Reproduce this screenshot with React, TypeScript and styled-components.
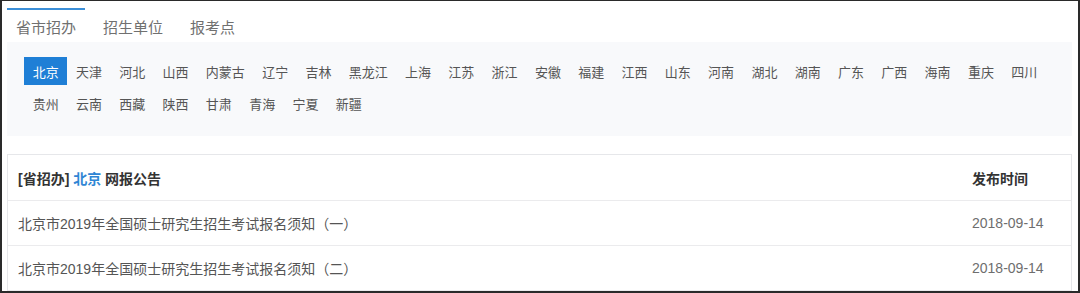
import React, { useState } from "react";
import styled, { createGlobalStyle } from "styled-components";

const GlobalStyle = createGlobalStyle`
  html, body {
    margin: 0;
    padding: 0;
    background: #ffffff;
  }
  body {
    font-family: "Liberation Sans", "Noto Sans CJK SC", sans-serif;
  }
`;

const tabs = ["省市招办", "招生单位", "报考点"];

const provinces = [
  "北京", "天津", "河北", "山西", "内蒙古", "辽宁", "吉林", "黑龙江", "上海", "江苏",
  "浙江", "安徽", "福建", "江西", "山东", "河南", "湖北", "湖南", "广东", "广西",
  "海南", "重庆", "四川", "贵州", "云南", "西藏", "陕西", "甘肃", "青海", "宁夏", "新疆",
];

const notices = [
  { title: "北京市2019年全国硕士研究生招生考试报名须知（一）", date: "2018-09-14" },
  { title: "北京市2019年全国硕士研究生招生考试报名须知（二）", date: "2018-09-14" },
];

export default function App() {
  const [activeTab, setActiveTab] = useState(0);
  const [province, setProvince] = useState("北京");

  return (
    <>
      <GlobalStyle />
      <Frame>
        <TabBar>
          {tabs.map((t, i) => (
            <Tab key={t} $active={i === activeTab} onClick={() => setActiveTab(i)}>
              {t}
            </Tab>
          ))}
        </TabBar>
        <ProvincePanel>
          {provinces.map((p) => (
            <ProvinceItem key={p} $active={p === province} onClick={() => setProvince(p)}>
              {p}
            </ProvinceItem>
          ))}
        </ProvincePanel>
        <NoticeCard>
          <HeaderRow>
            <HeaderTitle>
              [省招办] <Highlight>{province}</Highlight> 网报公告
            </HeaderTitle>
            <HeaderTitle>发布时间</HeaderTitle>
          </HeaderRow>
          {notices.map((n) => (
            <NoticeRow key={n.title}>
              <NoticeTitle>{n.title}</NoticeTitle>
              <NoticeDate>{n.date}</NoticeDate>
            </NoticeRow>
          ))}
        </NoticeCard>
      </Frame>
    </>
  );
}

const Frame = styled.div`
  box-sizing: border-box;
  width: 1080px;
  height: 293px;
  overflow: hidden;
  border: 2px solid #2a2a2a;
  border-top-width: 1px;
  padding: 7px 6px 0 5px;
  background: #ffffff;
`;

const TabBar = styled.div`
  display: flex;
  gap: 9px;
  height: 34px;
`;

const Tab = styled.div<{ $active: boolean }>`
  box-sizing: border-box;
  display: flex;
  align-items: center;
  padding: 0 9px;
  height: 34px;
  border-top: 2px solid ${(p) => (p.$active ? "#3b8fd8" : "transparent")};
  font-size: 15px;
  color: #707070;
  cursor: pointer;
`;

const ProvincePanel = styled.div`
  display: flex;
  flex-wrap: wrap;
  row-gap: 4px;
  padding: 15px 17px 19px 17px;
  background: #f8f9fb;
`;

const ProvinceItem = styled.div<{ $active: boolean }>`
  display: flex;
  align-items: center;
  height: 28px;
  padding: 0 8.65px;
  font-size: 13px;
  color: ${(p) => (p.$active ? "#ffffff" : "#555555")};
  background: ${(p) => (p.$active ? "#1f7fd6" : "transparent")};
  cursor: pointer;
`;

const NoticeCard = styled.div`
  margin-top: 18px;
  border: 1px solid #e6e7ea;
  border-bottom: none;
`;

const HeaderRow = styled.div`
  display: grid;
  grid-template-columns: 1fr 89px;
  align-items: center;
  height: 45px;
  padding: 0 10px;
  border-bottom: 1px solid #ebebed;
`;

const HeaderTitle = styled.div`
  font-size: 14px;
  font-weight: bold;
  color: #333333;
`;

const Highlight = styled.span`
  color: #2f86d4;
`;

const NoticeRow = styled.div`
  display: grid;
  grid-template-columns: 1fr 89px;
  align-items: center;
  height: 44px;
  padding: 0 10px;
  border-bottom: 1px solid #ebebed;
`;

const NoticeTitle = styled.div`
  font-size: 14px;
  color: #555555;
`;

const NoticeDate = styled.div`
  font-size: 14px;
  color: #6e6e6e;
`;
